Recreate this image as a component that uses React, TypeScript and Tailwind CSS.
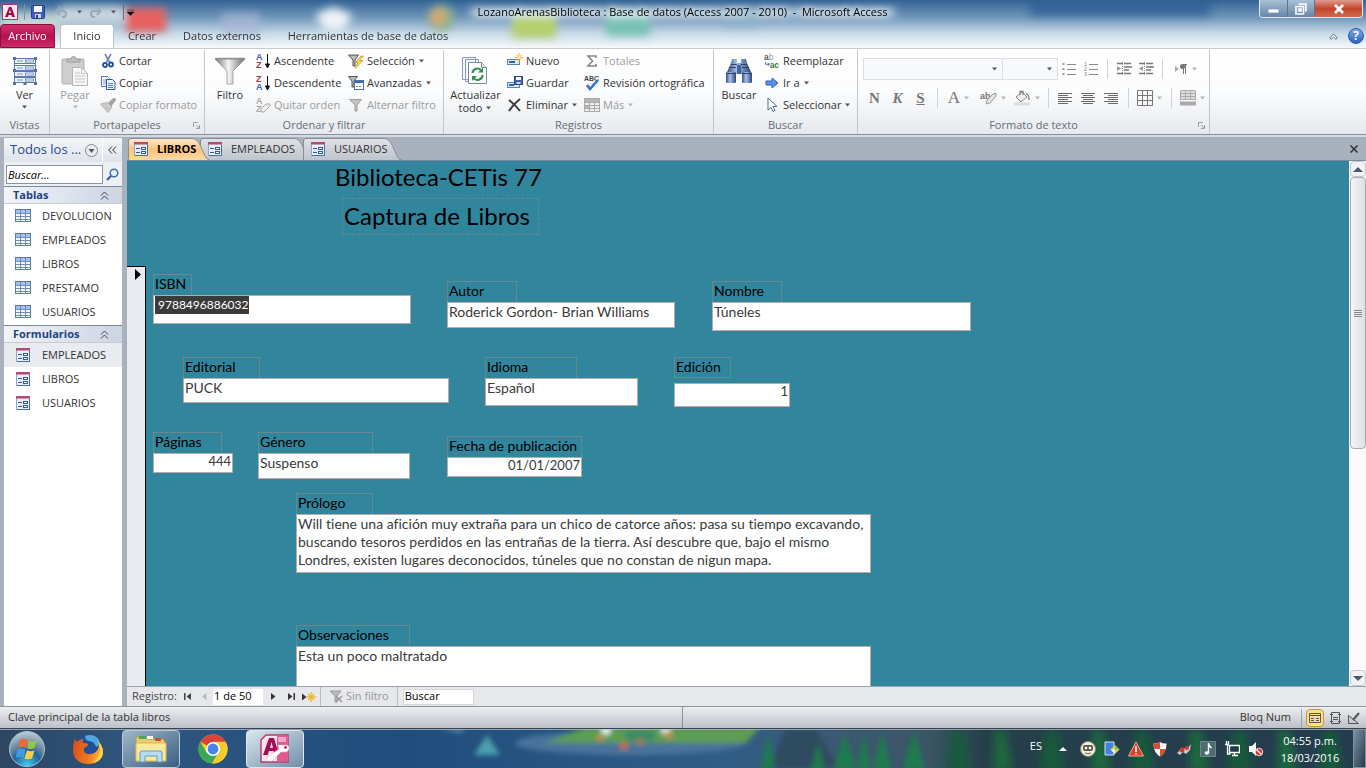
import React from "react";

type Kids = { children?: React.ReactNode };

/* ---------- small shared drawings ---------- */

function Caret({ dim = false }: { dim?: boolean }) {
  return (
    <svg width="7" height="4" viewBox="0 0 7 4" className="shrink-0">
      <path d="M1 0.5h5L3.5 3.5z" fill={dim ? "#b5b5b5" : "#555"} />
    </svg>
  );
}

function FormIcon() {
  return (
    <svg width="16" height="16" viewBox="0 0 16 16" className="shrink-0">
      <path d="M1.500 2.500h13v12h-13z" fill="#e6eefa" stroke="#8ea6cf" />
      <path d="M14.500 4v10.500H2" fill="none" stroke="#4a6aa8" />
      <path d="M1 1h14v2.500H1z" fill="#b24a74" />
      <path d="M3 7.500h4M3 11.500h4" stroke="#3457a0" />
      <rect x="8.500" y="6.500" width="4" height="2" fill="#fff" stroke="#3457a0" />
      <rect x="8.500" y="10.500" width="4" height="2" fill="#fff" stroke="#3457a0" />
    </svg>
  );
}

function TableIcon() {
  return (
    <svg width="16" height="14" viewBox="0 0 16 14" className="shrink-0">
      <rect x="0.500" y="0.500" width="15" height="12" fill="#f4f8fd" stroke="#5f7aa8" />
      <rect x="1" y="1" width="14" height="3" fill="#a9c0e4" />
      <path d="M1 4.500h14M1 7.500h14M1 10.500h14M5.500 1v12M10.500 1v12" stroke="#6f8cbd" />
    </svg>
  );
}

function Launcher() {
  return (
    <svg width="7" height="7" viewBox="0 0 7 7">
      <path d="M0.500 5V0.500H5M3 3l3 3M6.500 3v3.500H3" fill="none" stroke="#9a9fa6" />
    </svg>
  );
}

/* ---------- ribbon icons ---------- */

const icons = {
  ver: (
    <svg width="26" height="28" viewBox="0 0 26 28">
      <path d="M2.500 1v26M23.500 1v26" stroke="#5d7ab2" />
      {[1.500, 8.500, 14.500, 20.500].map((y) => (
        <g key={y}>
          <rect x="2.500" y={y} width="21" height="5" fill="#edf2fa" stroke="#5d7ab2" />
          <path d={`M5 ${y + 2.5}h6`} stroke="#7e98c6" />
          <rect x="13.500" y={y + 1.5} width="8" height="2" fill="#fff" stroke="#5d7ab2" strokeWidth="0.800" />
        </g>
      ))}
      <path d="M1 0h3v3H1zM22 0h3v3h-3zM1 12h3v3H1zM22 12h3v3h-3zM1 25h3v3H1zM22 25h3v3h-3zM11.500 25h3v3h-3z" fill="#5f6f92" />
    </svg>
  ),
  pegar: (
    <svg width="28" height="31" viewBox="0 0 28 31">
      <rect x="1" y="3" width="22" height="25" rx="1" fill="#cfcdd0" stroke="#b4b2b5" />
      <path d="M6 6V3h4a2.500 2.500 0 0 1 5 0h4v3z" fill="#c0bfc1" stroke="#9c9b9e" />
      <path d="M11.500 11.500h9l6 6v12h-15z" fill="#f6f6f7" stroke="#b4b4b6" />
      <path d="M20.500 11.500v6h6M14 17h5M14 20h10M14 23h10M14 26h10" fill="none" stroke="#c6c6c8" />
    </svg>
  ),
  cortar: (
    <svg width="16" height="16" viewBox="0 0 16 16">
      <path d="M5 1l5 9M11 1L6 10" stroke="#6d86b2" strokeWidth="1.600" />
      <circle cx="5" cy="12" r="2" fill="none" stroke="#2450a0" strokeWidth="1.800" />
      <circle cx="11" cy="11.500" r="2" fill="none" stroke="#2450a0" strokeWidth="1.800" />
    </svg>
  ),
  copiar: (
    <svg width="16" height="16" viewBox="0 0 16 16">
      <path d="M1.500 1.500h6l2 2v8h-8z" fill="#fff" stroke="#5577b5" />
      <path d="M3 5h4M3 7h4M3 9h3" stroke="#7a98cc" />
      <path d="M6.500 4.500h6l2.500 2.500v7.500H6.500z" fill="#eff5fd" stroke="#2f59a5" />
      <path d="M8 8.500h5M8 10.500h5M8 12.500h5" stroke="#5a7fc0" />
    </svg>
  ),
  formato: (
    <svg width="16" height="16" viewBox="0 0 16 16">
      <path d="M15.500 1l-3 .5L8 6l3 4 5-7z" fill="#a2a2a2" />
      <path d="M0.500 7l7-1.500L12 10l-4 5.500z" fill="#d2d2d2" stroke="#a5a5a5" strokeWidth="0.800" />
      <path d="M3 8l5 5M5 7l5 5" stroke="#b4b4b4" />
    </svg>
  ),
  filtro: (
    <svg width="32" height="28" viewBox="0 0 32 28">
      <defs>
        <linearGradient id="fun" x1="0" x2="1">
          <stop offset="0" stopColor="#747474" />
          <stop offset="0.450" stopColor="#f5f5f5" />
          <stop offset="1" stopColor="#6a6a6a" />
        </linearGradient>
      </defs>
      <path d="M1 2h30L19 14v13h-6V14z" fill="url(#fun)" stroke="#8a8a8a" strokeWidth="0.700" />
      <path d="M1 1.500h30" stroke="#909090" strokeWidth="1.500" />
    </svg>
  ),
  seleccion: (
    <svg width="16" height="16" viewBox="0 0 16 16">
      <path d="M0.500 2h10L7 7v6H5V7z" fill="#bbb" stroke="#555" />
      <path d="M13 3L7.500 9.500H10L7 15.500l8-8h-3.500l4-4.500z" fill="#ffd84a" stroke="#b48a1a" strokeWidth="0.700" />
    </svg>
  ),
  avanzadas: (
    <svg width="16" height="16" viewBox="0 0 16 16">
      <path d="M0.500 1.500h9L6 6v6H4V6z" fill="#bbb" stroke="#555" />
      <rect x="6.500" y="5.500" width="9" height="9" fill="#fff" stroke="#4a72b5" />
      <path d="M7 7h8" stroke="#3b68ba" strokeWidth="2" />
      <path d="M8 11.500h2M11 11.500h2" stroke="#777" />
    </svg>
  ),
  alternar: (
    <svg width="16" height="16" viewBox="0 0 16 16">
      <path d="M1.500 2.500h12L9 8v6H7V8z" fill="#c4c4c4" stroke="#9c9c9c" />
    </svg>
  ),
  actualizar: (
    <svg width="28" height="30" viewBox="0 0 28 30">
      <path d="M1.500 1.500h13v22h-13zM4.500 3.500h13v22h-13z" fill="#f6f7fb" stroke="#8c98b4" />
      <path d="M7.500 6.500h13l5 5v16h-18z" fill="#fff" stroke="#7786a6" />
      <path d="M20.500 6.500v5h5" fill="#dfe5f0" stroke="#7786a6" />
      <path d="M11.500 17a5 5 0 0 1 8.500-3M21.500 19a5 5 0 0 1-8.500 3.500" fill="none" stroke="#2e9447" strokeWidth="2.200" />
      <path d="M22 11.500v5h-5zM11 25v-5h5z" fill="#2e9447" />
    </svg>
  ),
  nuevo: (
    <svg width="16" height="16" viewBox="0 0 16 16">
      <rect x="0.500" y="6.500" width="12" height="5" fill="#dfeaf9" stroke="#5d80bb" />
      <path d="M2 9h6" stroke="#2d61b8" strokeWidth="2" />
      <path d="M12 0v9M7.500 4.500h9M9 1.500l6 6M15 1.500l-6 6" stroke="#eab620" />
      <circle cx="12" cy="4.500" r="1.500" fill="#fff4b0" />
    </svg>
  ),
  guardar: (
    <svg width="16" height="16" viewBox="0 0 16 16">
      <rect x="0.500" y="7.500" width="12" height="5" fill="#dfeaf9" stroke="#5d80bb" />
      <path d="M2 10h5" stroke="#2d61b8" strokeWidth="2" />
      <rect x="7.500" y="1.500" width="8" height="8" fill="#4661b0" stroke="#2d4386" />
      <path d="M9 2h5v3H9z" fill="#fff" />
      <path d="M9.500 7h4v2h-4z" fill="#cdd6ee" />
    </svg>
  ),
  eliminar: (
    <svg width="16" height="16" viewBox="0 0 16 16">
      <path d="M2 3c4 3 8 7 11 11M13 2C9 5 5 9 2 14" fill="none" stroke="#3a3a3a" strokeWidth="2" />
    </svg>
  ),
  totales: (
    <svg width="16" height="16" viewBox="0 0 16 16">
      <path d="M12 5V3H4l4.500 5L4 13h8v-2" fill="none" stroke="#888" strokeWidth="1.600" />
    </svg>
  ),
  revision: (
    <svg width="16" height="16" viewBox="0 0 16 16">
      <text x="0" y="6" fontSize="7" fontWeight="700" fontFamily="Liberation Sans" fill="#444">ABC</text>
      <path d="M3 10l3 4 8-9" fill="none" stroke="#3b6fca" strokeWidth="2.600" />
    </svg>
  ),
  mas: (
    <svg width="16" height="14" viewBox="0 0 16 14">
      <rect x="0.500" y="0.500" width="15" height="13" fill="#eee" stroke="#aaa" />
      <path d="M1 4.500h15M1 7.500h15M1 10.500h15M5.500 0v14M10.500 0v14" stroke="#aaa" />
      <path d="M1 1h14v3H1zM1 8h4v2H1z" fill="#b4b4b4" />
    </svg>
  ),
  buscar: (
    <svg width="28" height="28" viewBox="0 0 28 28">
      <defs>
        <linearGradient id="bin" x1="0" x2="1">
          <stop offset="0" stopColor="#35507f" />
          <stop offset="0.400" stopColor="#a9c1e8" />
          <stop offset="1" stopColor="#2c4674" />
        </linearGradient>
      </defs>
      <path d="M7 2h5v4h4V2h5l1 4 4 9v2H2v-2l4-9z" fill="url(#bin)" />
      <path d="M12 8h4v9h-4z" fill="#41629c" />
      <rect x="1" y="15" width="10" height="11" rx="1.500" fill="url(#bin)" />
      <rect x="17" y="15" width="10" height="11" rx="1.500" fill="url(#bin)" />
      <path d="M6 7.500h6M16 7.500h6M4 10.500h7M17 10.500h7M1 16.500h10M17 16.500h10" stroke="#2b4370" />
    </svg>
  ),
  reemplazar: (
    <svg width="17" height="16" viewBox="0 0 17 16">
      <text x="0" y="7" fontSize="9" fontWeight="700" fontFamily="Liberation Sans" fill="#555">a</text>
      <text x="5" y="7" fontSize="9" fontFamily="Liberation Sans" fill="#999">b</text>
      <text x="6" y="15" fontSize="9" fontWeight="700" fontFamily="Liberation Sans" fill="#3d7a45">ac</text>
      <path d="M1.500 9v2.500h4M4 10l2 1.500L4 13" fill="none" stroke="#4a6ba8" />
    </svg>
  ),
  ira: (
    <svg width="16" height="16" viewBox="0 0 16 16">
      <path d="M2 6h6V3l6 5-6 5v-3H2z" fill="#5d90e2" stroke="#2e5fb2" />
    </svg>
  ),
  seleccionar: (
    <svg width="16" height="16" viewBox="0 0 16 16">
      <path d="M4 1v12l3-2.500 2 4 2-1-2-4h4z" fill="#fff" stroke="#4d6794" />
    </svg>
  ),
};

function SortIcon({ a, b, ca, cb, dim }: { a: string; b: string; ca: string; cb: string; dim?: boolean }) {
  return (
    <svg width="16" height="18" viewBox="0 0 16 18">
      <text x="1" y="8" fontSize="9" fontWeight="700" fontFamily="Liberation Sans" fill={ca}>{a}</text>
      <text x="1" y="16" fontSize="9" fontWeight="700" fontFamily="Liberation Sans" fill={cb}>{b}</text>
      {dim ? (
        <path d="M6 13l5-5h4l-1 3-5 5H6z" fill="#eee" stroke="#aaa" />
      ) : (
        <path d="M12.500 2v12M10.500 12l2 4 2-4z" fill="#111" stroke="#111" />
      )}
    </svg>
  );
}

/* ---------- ribbon parts ---------- */

function Small({ icon, label, dim, caret }: { icon: React.ReactNode; label: string; dim?: boolean; caret?: boolean }) {
  return (
    <button className={`flex h-[22px] items-center gap-[3px] whitespace-nowrap ${dim ? "text-[#9c9c9c]" : "text-[#333]"}`}>
      <span className="flex w-4 shrink-0 justify-center">{icon}</span>
      <span>{label}</span>
      {caret && <Caret dim={dim} />}
    </button>
  );
}

function Big({ icon, children, dim }: Kids & { icon: React.ReactNode; dim?: boolean }) {
  return (
    <button className={`flex flex-col items-center pt-1 leading-[13px] ${dim ? "text-[#9c9c9c]" : "text-[#333]"}`}>
      <span className="flex h-[34px] items-center">{icon}</span>
      {children}
    </button>
  );
}

function Group({ title, launcher, className, children }: Kids & { title: string; launcher?: boolean; className: string }) {
  return (
    <section className={`flex flex-col border-r border-[#c3c7cd] ${className}`}>
      <div className="flex h-[67px]">{children}</div>
      <div className="flex h-[17px] items-center">
        <h2 className="flex-1 text-center text-[#666d77]">{title}</h2>
        {launcher && <button aria-label={`Opciones de ${title}`} className="mr-1 -ml-[11px]"><Launcher /></button>}
      </div>
    </section>
  );
}

function Sep() {
  return <span className="mx-[5px] h-5 w-px bg-[#cfd2d6]" />;
}

function Lines({ rows }: { rows: [number, number][] }) {
  return (
    <svg width="15" height="14" viewBox="0 0 15 14">
      {rows.map(([x, w], i) => (
        <path key={i} d={`M${x} ${i * 2 + 2.5}h${w}`} stroke="#6a6a6a" strokeWidth="1" />
      ))}
    </svg>
  );
}

function ListIcon({ numbered }: { numbered?: boolean }) {
  return (
    <svg width="14" height="14" viewBox="0 0 14 14">
      {[2, 7, 12].map((y, i) => (
        <g key={y}>
          {numbered ? (
            <text x="0" y={y + 2} fontSize="5" fontFamily="Liberation Sans" fill="#777">{i + 1}</text>
          ) : (
            <rect x="0.500" y={y - 1} width="2" height="2" fill="#999" />
          )}
          <path d={`M5 ${y + 0.5}h9`} stroke="#888" />
        </g>
      ))}
    </svg>
  );
}

function IndentIcon({ out }: { out?: boolean }) {
  return (
    <svg width="16" height="14" viewBox="0 0 16 14">
      <path d="M1 1.500h6M8 1.500h7M8 5h8M8 8h5M1 11.500h6M8 11.500h7" stroke="#777" strokeWidth="1.500" />
      <path d="M6.500 0v14" stroke="#999" strokeDasharray="1 1" />
      <path d={out ? "M5 4L1 6.500 5 9z" : "M1 4l4 2.500L1 9z"} fill="#999" />
    </svg>
  );
}

function IconBtn({ label, className = "w-[23px]", children }: Kids & { label: string; className?: string }) {
  return <button aria-label={label} className={`flex h-[22px] items-center justify-center gap-[3px] ${className}`}>{children}</button>;
}

function Ribbon() {
  return (
    <div className="flex h-[87px] shrink-0 border-t border-b border-t-[#c6ccd4] border-b-[#8b9098] bg-gradient-to-b from-white via-[#fbfcfd] to-[#e6e9ed] pt-px text-[11px]">
      <Group title="Vistas" className="w-[50px]">
        <div className="flex w-full justify-center">
          <Big icon={icons.ver}>Ver<span className="py-1"><Caret /></span></Big>
        </div>
      </Group>
      <Group title="Portapapeles" launcher className="w-[155px]">
        <div className="flex w-[50px] justify-center">
          <Big dim icon={icons.pegar}>Pegar<span className="py-1"><Caret dim /></span></Big>
        </div>
        <div>
          <Small icon={icons.cortar} label="Cortar" />
          <Small icon={icons.copiar} label="Copiar" />
          <Small dim icon={icons.formato} label="Copiar formato" />
        </div>
      </Group>
      <Group title="Ordenar y filtrar" className="w-[239px]">
        <div className="flex w-[50px] justify-center">
          <Big icon={icons.filtro}>Filtro</Big>
        </div>
        <div className="w-[93px]">
          <Small icon={<SortIcon a="A" b="Z" ca="#3a62a8" cb="#a53c46" />} label="Ascendente" />
          <Small icon={<SortIcon a="Z" b="A" ca="#a53c46" cb="#3a62a8" />} label="Descendente" />
          <Small dim icon={<SortIcon a="A" b="Z" ca="#aaa" cb="#aaa" dim />} label="Quitar orden" />
        </div>
        <div>
          <Small caret icon={icons.seleccion} label="Selección" />
          <Small caret icon={icons.avanzadas} label="Avanzadas" />
          <Small dim icon={icons.alternar} label="Alternar filtro" />
        </div>
      </Group>
      <Group title="Registros" className="w-[270px]">
        <div className="flex w-[63px] justify-center">
          <Big icon={icons.actualizar}>Actualizar<span className="flex items-center gap-[3px]">todo <Caret /></span></Big>
        </div>
        <div className="w-[77px]">
          <Small icon={icons.nuevo} label="Nuevo" />
          <Small icon={icons.guardar} label="Guardar" />
          <Small caret icon={icons.eliminar} label="Eliminar" />
        </div>
        <div>
          <Small dim icon={icons.totales} label="Totales" />
          <Small icon={icons.revision} label="Revisión ortográfica" />
          <Small dim caret icon={icons.mas} label="Más" />
        </div>
      </Group>
      <Group title="Buscar" className="w-[144px]">
        <div className="flex w-[50px] justify-center">
          <Big icon={icons.buscar}>Buscar</Big>
        </div>
        <div>
          <Small icon={icons.reemplazar} label="Reemplazar" />
          <Small caret icon={icons.ira} label="Ir a" />
          <Small caret icon={icons.seleccionar} label="Seleccionar" />
        </div>
      </Group>
      <Group title="Formato de texto" launcher className="w-[352px]">
        <div className="flex flex-col gap-[7px] pt-2 pl-[5px]">
          <div className="flex items-center">
            <div className="flex h-[22px] w-[140px] items-center justify-end border border-[#dcdfe3] bg-[#f8f9fa] pr-1">
              <select aria-label="Fuente" className="w-full appearance-none"><option></option></select><Caret />
            </div>
            <div className="flex h-[22px] w-[55px] items-center justify-end border border-l-0 border-[#dcdfe3] bg-[#f8f9fa] pr-1">
              <select aria-label="Tamaño" className="w-full appearance-none"><option></option></select><Caret />
            </div>
            <IconBtn label="Viñetas" className="w-[22px]"><ListIcon /></IconBtn>
            <IconBtn label="Numeración" className="w-[22px]"><ListIcon numbered /></IconBtn>
            <Sep />
            <IconBtn label="Aumentar sangría" className="w-[22px]"><IndentIcon /></IconBtn>
            <IconBtn label="Reducir sangría" className="w-[22px]"><IndentIcon out /></IconBtn>
            <Sep />
            <IconBtn label="Dirección del texto" className="w-9">
              <svg width="14" height="12" viewBox="0 0 14 12">
                <path d="M1 3l4 3-4 3z" fill="#aaa" />
                <path d="M9.500 1v10M11.500 1v10M13 1.500H9" stroke="#777" />
                <circle cx="8.500" cy="3.500" r="2.500" fill="#777" />
              </svg>
              <Caret dim />
            </IconBtn>
          </div>
          <div className="flex items-center font-['Liberation_Serif',serif] text-[15px] font-bold text-[#777]">
            <IconBtn label="Negrita">N</IconBtn>
            <IconBtn label="Cursiva"><i>K</i></IconBtn>
            <IconBtn label="Subrayado"><u>S</u></IconBtn>
            <Sep />
            <IconBtn label="Color de fuente" className="w-8"><span className="text-[17px] font-normal">A</span><Caret dim /></IconBtn>
            <IconBtn label="Color de resaltado" className="w-9">
              <svg width="17" height="14" viewBox="0 0 17 14">
                <text x="0" y="8" fontSize="9" fontFamily="Liberation Sans" fill="#777">ab</text>
                <path d="M7 9l6-6 3-1v3l-6 7-4 1z" fill="#e4e4e4" stroke="#999" />
              </svg>
              <Caret dim />
            </IconBtn>
            <IconBtn label="Color de fondo" className="w-8">
              <svg width="17" height="16" viewBox="0 0 17 16">
                <path d="M2 7l6-5 5 5-6 5z" fill="#eee" stroke="#888" />
                <path d="M6 5V1.500h3V5M12 4c3 0 3 3 3 6" fill="none" stroke="#888" strokeWidth="1.400" />
                <path d="M0 14h16" stroke="#dcdcdc" strokeWidth="3" />
              </svg>
              <Caret dim />
            </IconBtn>
            <Sep />
            <IconBtn label="Alinear a la izquierda"><Lines rows={[[0, 14], [0, 10], [0, 14], [0, 10], [0, 14], [0, 10]]} /></IconBtn>
            <IconBtn label="Centrar"><Lines rows={[[0, 14], [2, 10], [0, 14], [2, 10], [0, 14], [2, 10]]} /></IconBtn>
            <IconBtn label="Alinear a la derecha"><Lines rows={[[0, 14], [4, 10], [0, 14], [4, 10], [0, 14], [4, 10]]} /></IconBtn>
            <Sep />
            <IconBtn label="Líneas de división" className="w-8">
              <svg width="16" height="16" viewBox="0 0 16 16"><path d="M0.500 0.500h15v15H0.500zM5.500 0v16M10.500 0v16M0 5.500h16M0 10.500h16" fill="none" stroke="#777" /></svg>
              <Caret dim />
            </IconBtn>
            <Sep />
            <IconBtn label="Color de fila alternativo" className="w-8">
              <svg width="16" height="16" viewBox="0 0 16 16">
                <path d="M0.500 0.500h15v9H0.500z" fill="#ddd" stroke="#aaa" />
                <path d="M0 3.500h16M0 6.500h16M5.500 0v10M10.500 0v10" stroke="#aaa" />
                <path d="M0 13.500h16" stroke="#a9a9a9" strokeWidth="4" />
              </svg>
              <Caret dim />
            </IconBtn>
          </div>
        </div>
      </Group>
    </div>
  );
}

/* ---------- window frame ---------- */

function GlassBackdrop() {
  return (
    <svg className="absolute inset-0 h-full w-full" viewBox="0 0 1366 48" preserveAspectRatio="none" aria-hidden="true">
      <defs>
        <linearGradient id="sky" x2="0" y2="1">
          <stop offset="0" stopColor="#336394" />
          <stop offset="0.350" stopColor="#6d94b8" />
          <stop offset="0.700" stopColor="#c9dbe8" />
          <stop offset="1" stopColor="#f6f9fb" />
        </linearGradient>
        <filter id="soft" x="-50%" y="-50%" width="200%" height="200%"><feGaussianBlur stdDeviation="4" /></filter>
      </defs>
      <rect width="1366" height="48" fill="url(#sky)" />
      <g filter="url(#soft)">
        <rect x="0" y="12" width="60" height="20" fill="#cfe0d8" opacity="0.800" />
        <rect x="60" y="6" width="65" height="18" fill="#d8e2e4" opacity="0.850" />
        <rect x="126" y="8" width="40" height="24" fill="#e8605f" />
        <rect x="222" y="13" width="38" height="22" fill="#a9b6d6" opacity="0.700" />
        <path d="M315 15l18-8 20 8-10 16h-18z" fill="#edf2f7" />
        <circle cx="441" cy="18" r="13" fill="#8fb48a" />
        <rect x="432" y="10" width="12" height="14" fill="#e2a56c" />
        <rect x="512" y="14" width="44" height="24" fill="#b5cf6c" />
        <rect x="606" y="10" width="44" height="26" fill="#78c2b4" />
        <rect x="470" y="8" width="425" height="9" fill="#e3edf5" opacity="0.700" />
        <rect x="725" y="12" width="34" height="14" fill="#8eb3cc" />
        <rect x="1030" y="0" width="180" height="16" fill="#2a5b90" opacity="0.700" />
      </g>
    </svg>
  );
}

function Header() {
  return (
    <header className="relative h-12 shrink-0 overflow-hidden">
      <GlassBackdrop />
      <div className="relative flex h-6 items-center">
        <div className="flex flex-1 items-center gap-[6px] pl-[2px]">
          <svg width="16" height="16" viewBox="0 0 16 16">
            <rect x="0.500" y="0.500" width="15" height="15" fill="#fbe6ee" stroke="#a03a66" />
            <path d="M3 13L7 3h2.500L13 13h-3l-.6-2H6.500L6 13zM7 9h2L8 5.500z" fill="#9c1250" fillRule="evenodd" />
          </svg>
          <span className="h-4 w-px bg-[#7d93a8]" />
          <button aria-label="Guardar">
            <svg width="14" height="14" viewBox="0 0 14 14">
              <rect x="0.500" y="0.500" width="13" height="13" rx="1" fill="#3f5fc0" stroke="#28408c" />
              <path d="M3 1h8v6H3z" fill="#f3f6fc" /><path d="M4 9h6v4H4z" fill="#c9d4ee" /><path d="M5 10h2v3H5z" fill="#28408c" />
            </svg>
          </button>
          <button aria-label="Deshacer" className="flex items-center gap-2 pl-1">
            <svg width="13" height="12" viewBox="0 0 13 12"><path d="M3 5h5a3 3 0 0 1 0 6H7M5 1L1.500 5 5 9" fill="none" stroke="#9aa9b6" strokeWidth="2" /></svg>
            <Caret />
          </button>
          <button aria-label="Rehacer" className="flex items-center gap-2">
            <svg width="13" height="12" viewBox="0 0 13 12"><path d="M10 5H5a3 3 0 0 0 0 6h1M8 1l3.500 4L8 9" fill="none" stroke="#9aa9b6" strokeWidth="2" /></svg>
            <Caret />
          </button>
          <span className="h-4 w-px bg-[#5e7488]" />
          <button aria-label="Personalizar barra" className="-ml-[3px]">
            <svg width="7" height="7" viewBox="0 0 7 7"><path d="M0 1h7M0 3h7L3.500 6.500z" fill="#111" stroke="#111" strokeWidth="0.500" /></svg>
          </button>
        </div>
        <h1 className="text-[11px] whitespace-pre text-black [text-shadow:0_0_6px_#fff,0_0_8px_#fff]">
          LozanoArenasBiblioteca : Base de datos (Access 2007 - 2010)  -  Microsoft Access
        </h1>
        <div className="flex flex-1 justify-end self-start pr-[3px]">
          <div className="flex h-[18px] overflow-hidden rounded-b border border-t-0 border-[#dce8f2]">
            <button aria-label="Minimizar" className="flex w-7 items-center justify-center border-r border-[#5b7694] bg-gradient-to-b from-[#a9bfd4] to-[#6586a8] pt-1">
              <svg width="11" height="4"><rect width="11" height="4" fill="#fff" stroke="#56687d" strokeWidth="0.600" /></svg>
            </button>
            <button aria-label="Restaurar" className="flex w-[27px] items-center justify-center border-r border-[#5b7694] bg-gradient-to-b from-[#a9bfd4] to-[#6586a8]">
              <svg width="12" height="12" viewBox="0 0 12 12"><path d="M3.500 1h7.500v7.500M1 3.500h7.500V11H1zM4 6h2v2H4z" fill="none" stroke="#fff" strokeWidth="1.600" /></svg>
            </button>
            <button aria-label="Cerrar" className="flex w-[47px] items-center justify-center bg-gradient-to-b from-[#dd9a8c] via-[#c4452f] to-[#cf6b4a]">
              <svg width="12" height="10" viewBox="0 0 12 10"><path d="M2 1l8 8M10 1L2 9" stroke="#fff" strokeWidth="2.800" /></svg>
            </button>
          </div>
        </div>
      </div>
      <nav className="relative flex h-6 items-stretch text-[11px] text-[#333]">
        <button className="w-[55px] rounded-t border border-[#8c0b43] bg-gradient-to-b from-[#d0326c] via-[#b3104f] to-[#cf2a68] text-white">Archivo</button>
        <button className="ml-[5px] w-[54px] rounded-t border border-b-0 border-[#b8c3cf] bg-white">Inicio</button>
        <button className="w-14">Crear</button>
        <button className="ml-2 w-[88px]">Datos externos</button>
        <button className="ml-2 w-[188px]">Herramientas de base de datos</button>
        <div className="ml-auto flex items-center gap-[10px] pr-[2px]">
          <button aria-label="Minimizar la cinta">
            <svg width="9" height="7" viewBox="0 0 9 7"><path d="M0.700 5L4.500 1l3.800 4-1.500 1.200L4.500 4 2.200 6.200z" fill="#fff" stroke="#444" strokeWidth="0.800" /></svg>
          </button>
          <button aria-label="Ayuda" className="flex size-4 items-center justify-center rounded-full border border-[#2c5ba8] bg-gradient-to-b from-[#7ea6e6] to-[#2d63bd] text-[12px] font-bold text-white">?</button>
        </div>
      </nav>
    </header>
  );
}

/* ---------- navigation pane ---------- */

function DoubleUp() {
  return <svg width="9" height="9" viewBox="0 0 9 9"><path d="M1 4.500L4.500 1 8 4.500M1 8.500L4.500 5 8 8.500" fill="none" stroke="#444" /></svg>;
}

function NavSection({ title, items, icon, active }: { title: string; items: string[]; icon: React.ReactNode; active?: number }) {
  return (
    <section className="pb-px">
      <button className="flex h-[18px] w-full items-center justify-between border-t border-b border-t-[#7f8897] border-b-[#c5cad3] bg-gradient-to-r from-[#f1f4f8] to-[#cdd4e2] pr-[13px] pl-[9px] text-[11px] font-bold text-[#1e4287]">
        {title}<DoubleUp />
      </button>
      <ul>
        {items.map((it, i) => (
          <li key={it}>
            <button className={`flex h-6 w-full items-center gap-[11px] pl-[11px] text-[11px] text-[#333] ${i === active ? "bg-[#e8ebf0]" : ""}`}>
              {icon}{it}
            </button>
          </li>
        ))}
      </ul>
    </section>
  );
}

function NavPane() {
  return (
    <aside className="flex w-[118px] shrink-0 flex-col bg-white">
      <div className="flex h-6 items-center bg-gradient-to-b from-[#f4f6f9] to-[#dfe3ea] pl-[6px]">
        <span className="flex-1 text-[13px] whitespace-nowrap text-[#1f4a94]">Todos los ...</span>
        <button aria-label="Elegir categoría" className="mr-1">
          <svg width="13" height="13" viewBox="0 0 13 13"><circle cx="6.500" cy="6.500" r="6" fill="#e9ebee" stroke="#888" /><path d="M3.500 5h6l-3 4z" fill="#555" /></svg>
        </button>
        <button aria-label="Contraer panel" className="flex h-full w-5 items-center justify-center border-l border-white">
          <svg width="9" height="8" viewBox="0 0 9 8"><path d="M4 0.500L0.700 4 4 7.500M8 0.500L4.700 4 8 7.500" fill="none" stroke="#333" /></svg>
        </button>
      </div>
      <div className="flex h-6 items-center gap-[3px] bg-[#eceff3] px-[2px]">
        <input aria-label="Buscar objetos" placeholder="Buscar..." className="h-[19px] w-[97px] border border-[#8994a3] bg-white px-[1px] text-[11px] italic placeholder:text-black" />
        <svg width="13" height="13" viewBox="0 0 13 13"><circle cx="8" cy="5" r="3.800" fill="#eaf4fd" stroke="#3f6fae" strokeWidth="1.500" /><path d="M5 8l-4 4" stroke="#2f5c9e" strokeWidth="2.200" /></svg>
      </div>
      <NavSection title="Tablas" icon={<TableIcon />} items={["DEVOLUCION", "EMPLEADOS", "LIBROS", "PRESTAMO", "USUARIOS"]} />
      <NavSection title="Formularios" icon={<FormIcon />} items={["EMPLEADOS", "LIBROS", "USUARIOS"]} active={0} />
    </aside>
  );
}

/* ---------- document area ---------- */

function DocTab({ label, active, className, d, viewBox }: { label: string; active?: boolean; className: string; d: string; viewBox: string }) {
  return (
    <button className={`relative flex h-[22px] items-center ${className}`}>
      <svg className="absolute inset-0 h-full w-full" viewBox={viewBox} preserveAspectRatio="none">
        <defs>
          <linearGradient id={`tab${label}`} x2="0" y2="1">
            <stop offset="0" stopColor={active ? "#fdebd0" : "#dfe2e6"} />
            <stop offset="0.500" stopColor={active ? "#fbc27e" : "#cfd3d8"} />
            <stop offset="1" stopColor={active ? "#fdd9a0" : "#bfc5cd"} />
          </linearGradient>
        </defs>
        <path d={d} fill={`url(#tab${label})`} stroke="#868e99" />
      </svg>
      <span className="relative flex items-center gap-2"><FormIcon /><span className={active ? "font-bold text-black" : "text-[#333]"}>{label}</span></span>
    </button>
  );
}

type FieldProps = {
  id: string;
  label: string;
  value: string;
  className?: string;
  labelClass: string;
  boxClass: string;
  right?: boolean;
  selected?: boolean;
};

function Field({ id, label, value, className = "", labelClass, boxClass, right, selected }: FieldProps) {
  return (
    <div className={`flex shrink-0 flex-col items-start ${className}`}>
      <label htmlFor={id} className={`h-[21px] border border-b-0 border-[#6b8890] px-px leading-[18px] whitespace-nowrap text-black ${labelClass}`}>{label}</label>
      <div className={`border border-[#b9aca6] bg-white px-px ${boxClass}`}>
        <input
          id={id}
          defaultValue={value}
          className={`block ${selected ? "h-[18px] w-[94px] bg-[#3b3b3b] pl-[3px] text-[12px] text-white" : "h-4 w-full text-[#3a3a3a]"} ${right ? "text-right text-[13px]" : ""}`}
        />
      </div>
    </div>
  );
}

function Memo({ id, label, value, className, labelClass, boxClass }: FieldProps) {
  return (
    <div className={`ml-[150px] flex flex-col items-start ${className}`}>
      <label htmlFor={id} className={`h-[21px] shrink-0 border border-b-0 border-[#6b8890] px-px leading-[18px] text-black ${labelClass}`}>{label}</label>
      <textarea id={id} defaultValue={value} className={`block w-[575px] resize-none overflow-hidden border border-[#b9aca6] bg-white px-px leading-[18px] whitespace-pre text-[#3a3a3a] ${boxClass}`} />
    </div>
  );
}

const prologo =
  "Will tiene una afición muy extraña para un chico de catorce años: pasa su tiempo excavando,\nbuscando tesoros perdidos en las entrañas de la tierra. Así descubre que, bajo el mismo\nLondres, existen lugares deconocidos, túneles que no constan de nigun mapa.";

function BookForm() {
  return (
    <form className="flex min-w-0 flex-1 flex-col overflow-hidden bg-[#31859c] font-['Lato',sans-serif] text-[14px] [font-variant-ligatures:none]">
      <div className="h-[105px] shrink-0 pl-[208px] text-[24px] text-black">
        <h2 className="leading-[32px]">Biblioteca-CETis 77</h2>
        <h3 className="mt-[5px] ml-[7px] h-[37px] w-[197px] border border-dashed border-[#6b8890] px-px leading-[33px] whitespace-nowrap">Captura de Libros</h3>
      </div>
      <div className="flex min-h-0 flex-1">
        <div className="w-[19px] shrink-0 border-t border-r border-black bg-[#e8ebf0] pt-[2px] pl-2">
          <svg width="6" height="11" viewBox="0 0 6 11"><path d="M0 0l6 5.500L0 11z" fill="#000" /></svg>
        </div>
        <div className="flex min-w-0 flex-1 flex-col overflow-hidden pt-2">
          <div className="flex items-start gap-9 pl-[7px]">
            <Field id="isbn" label="ISBN" value="9788496886032" labelClass="w-[39px]" boxClass="h-[29px] w-[258px]" selected />
            <Field id="autor" label="Autor" value="Roderick Gordon- Brian Williams" className="mt-[7px]" labelClass="w-[70px]" boxClass="h-[26px] w-[228px]" />
            <Field id="nombre" label="Nombre" value="Túneles" className="ml-px mt-[7px]" labelClass="w-[70px]" boxClass="h-[29px] w-[259px]" />
          </div>
          <div className="mt-[26px] flex items-start gap-9 pl-[37px]">
            <Field id="editorial" label="Editorial" value="PUCK" labelClass="w-[77px]" boxClass="h-[25px] w-[266px]" />
            <Field id="idioma" label="Idioma" value="Español" labelClass="w-[92px]" boxClass="h-[28px] w-[153px]" />
            <Field id="edicion" label="Edición" value="1" labelClass="mb-[5px] w-[57px] border-b-1" boxClass="h-[24px] w-[116px]" right />
          </div>
          <div className="mt-[25px] flex items-start pl-[7px]">
            <Field id="paginas" label="Páginas" value="444" labelClass="w-[69px]" boxClass="h-5 w-[80px]" right />
            <Field id="genero" label="Género" value="Suspenso" className="ml-[25px]" labelClass="w-[115px]" boxClass="h-[26px] w-[152px]" />
            <Field id="fecha" label="Fecha de publicación" value="01/01/2007" className="mt-1 ml-[37px]" labelClass="w-[135px]" boxClass="h-5 w-[135px]" right />
          </div>
          <Memo id="prologo" label="Prólogo" value={prologo} className="mt-[14px] shrink-0" labelClass="w-[77px]" boxClass="h-[59px]" />
          <Memo id="observaciones" label="Observaciones" value="Esta un poco maltratado" className="mt-[52px] min-h-0 flex-1" labelClass="w-[114px]" boxClass="flex-1 border-b-0" />
        </div>
      </div>
    </form>
  );
}

function ScrollBar() {
  return (
    <div className="flex w-[17px] shrink-0 flex-col items-center bg-[#fafafb]">
      <button aria-label="Subir" className="flex h-4 w-4 items-center justify-center rounded-sm border border-[#c3c7cd] bg-[#f1f2f4]">
        <svg width="10" height="5"><path d="M0 5l5-5 5 5z" fill="#4a5878" /></svg>
      </button>
      <div className="flex w-4 flex-[272] flex-col items-center justify-center gap-px rounded-sm border border-[#a5abb3] bg-gradient-to-r from-[#f5f5f6] to-[#dddfe2]">
        {[0, 1, 2, 3].map((n) => <span key={n} className="h-px w-2 bg-[#888]" />)}
      </div>
      <div className="flex-[222]" />
      <button aria-label="Bajar" className="flex h-4 w-4 items-center justify-center rounded-sm border border-[#c3c7cd] bg-[#f1f2f4]">
        <svg width="10" height="5"><path d="M0 0h10L5 5z" fill="#4a5878" /></svg>
      </button>
    </div>
  );
}

function RecordBar() {
  return (
    <div className="flex h-5 shrink-0 items-center border-t border-[#9aa3ad] bg-[#e6e8ec] text-[11px] text-[#444]">
      <span className="w-[57px] pl-[5px]">Registro:</span>
      <button aria-label="Primer registro" className="w-4"><svg width="8" height="7"><path d="M0 0h1.500v7H0zM7 0v7L2.500 3.500z" fill="#444" /></svg></button>
      <button aria-label="Registro anterior" className="ml-[2px] w-[11px]"><svg width="5" height="7"><path d="M4.500 0v7L0 3.500z" fill="#b5b8bd" /></svg></button>
      <input aria-label="Registro actual" defaultValue="1 de 50" className="h-4 w-[50px] bg-white px-px text-black" />
      <button aria-label="Registro siguiente" className="ml-[8px] w-[17px]"><svg width="5" height="7"><path d="M0 0v7l4.500-3.500z" fill="#333" /></svg></button>
      <button aria-label="Último registro" className="w-[14px]"><svg width="8" height="7"><path d="M0 0v7l4.500-3.500zM5.500 0H7v7H5.500z" fill="#333" /></svg></button>
      <button aria-label="Nuevo registro" className="w-[18px]"><svg width="14" height="10" viewBox="0 0 14 10"><path d="M0 1.500v7L4.500 5z" fill="#333" /><path d="M9 0v10M5 5h9M6 2l6 6M12 2L6 8" stroke="#edb82e" strokeWidth="1.300" /></svg></button>
      <button className="flex h-full items-center gap-[3px] border-x border-[#b9bdc4] px-2 text-[#999]">
        <svg width="14" height="13" viewBox="0 0 14 13"><path d="M1 1h11L8 6v6H6V6z" fill="#bbb" stroke="#999" /><path d="M7 6l6 6M13 6l-6 6" stroke="#999" strokeWidth="1.500" /></svg>
        Sin filtro
      </button>
      <input aria-label="Buscar registro" defaultValue="Buscar" className="ml-[5px] h-4 w-[71px] border border-[#d3d6da] bg-white px-px text-black" />
    </div>
  );
}

/* ---------- status bar and taskbar ---------- */

function StatusBar() {
  return (
    <footer className="flex h-[23px] shrink-0 items-center border-t border-b border-t-[#8d939b] border-b-[#39434f] bg-gradient-to-b from-[#eceef1] to-[#bdc1c7] text-[11px] text-[#333]">
      <span className="flex h-full w-1/2 items-center border-r border-[#8b9199] pl-2">Clave principal de la tabla libros</span>
      <span className="ml-auto pr-[10px]">Bloq Num</span>
      <div className="flex items-center gap-[3px] border-l border-[#9da3ab] pr-1 pl-1">
        <button aria-label="Vista Formulario" className="flex h-[18px] w-[18px] items-center justify-center rounded-sm border border-[#c29a3e] bg-[#fbe08a]">
          <svg width="12" height="10" viewBox="0 0 12 10"><path d="M0.500 0.500h11v9H0.500zM0.500 2.500h11M2 5.500h3M2 7.500h3M7 5.500h3M7 7.500h3" fill="none" stroke="#555" /></svg>
        </button>
        <button aria-label="Vista Presentación" className="flex w-4 justify-center"><svg width="11" height="12" viewBox="0 0 11 12"><path d="M1.500 0.500h8v11h-8zM0 2.500h3M8 2.500h3M3 5.500h5M3 7.500h5M0 9.500h3M8 9.500h3" fill="none" stroke="#555" /></svg></button>
        <button aria-label="Vista Diseño" className="flex w-4 justify-center"><svg width="12" height="12" viewBox="0 0 12 12"><path d="M0.500 3.500v8h10z" fill="#c9ccd1" stroke="#555" /><path d="M11 1L5 8" stroke="#555" strokeWidth="2" /></svg></button>
      </div>
    </footer>
  );
}

function TaskBackdrop() {
  const trees = [768, 818, 845, 864, 882, 914];
  const woods = [958, 1000, 1052, 1098, 1142, 1196, 1240, 1284, 1330];
  return (
    <svg className="absolute inset-0 h-full w-full" viewBox="0 0 1366 39" preserveAspectRatio="none" aria-hidden="true">
      <defs>
        <linearGradient id="task">
          <stop offset="0" stopColor="#2e4661" />
          <stop offset="0.100" stopColor="#2f567f" />
          <stop offset="0.300" stopColor="#1f4d7d" />
          <stop offset="0.530" stopColor="#305d87" />
          <stop offset="0.620" stopColor="#3d5870" />
          <stop offset="0.680" stopColor="#3a5665" />
          <stop offset="0.720" stopColor="#263f4b" />
          <stop offset="1" stopColor="#243c4e" />
        </linearGradient>
        <filter id="blur2" x="-20%" y="-20%" width="140%" height="140%"><feGaussianBlur stdDeviation="2.500" /></filter>
        <filter id="blur4" x="-20%" y="-20%" width="140%" height="140%"><feGaussianBlur stdDeviation="5" /></filter>
      </defs>
      <rect width="1366" height="39" fill="url(#task)" />
      <g filter="url(#blur2)">
        <ellipse cx="630" cy="14" rx="115" ry="12" fill="#48739c" />
        <path d="M545 14l40-16h175l-14 16z" fill="#5d9c52" />
        <circle cx="606" cy="1" r="5" fill="#e6efe6" /><circle cx="666" cy="1" r="5" fill="#dfe9df" />
        <path d="M625 2h30v10h-30z" fill="#3d8a63" />
        <circle cx="600" cy="9" r="3" fill="#d2813f" /><circle cx="624" cy="17" r="4" fill="#c46a3f" /><circle cx="640" cy="13" r="3" fill="#b9753f" /><circle cx="669" cy="6" r="4" fill="#c08a4c" />
        <path d="M487 6l13 20h-26z" fill="#4aa0ae" />
        <path d="M785 0h30l25 39h-70z" fill="#2f4c5f" />
        {trees.map((x, i) => (
          <path key={x} d={`M${x} ${i === 1 ? 14 : 3}l${7 + (i % 3) * 2} 37h-${14 + (i % 3) * 4}z`} fill="#1f7c4e" />
        ))}
        <path d="M460 0h-20l25 3z" fill="#8fc0d0" />
      </g>
      <g filter="url(#blur4)">
        {woods.map((x, i) => (
          <path key={x} d={`M${x - 5} 0h10l8 42h-${26 - (i % 2) * 6}z`} fill={i % 2 ? "#1a6a3c" : "#175c3b"} />
        ))}
      </g>
      <path d="M0 0.500h1366" stroke="#b8c8d4" opacity="0.700" />
    </svg>
  );
}

function Taskbar() {
  return (
    <div className="relative h-[39px] shrink-0">
      <TaskBackdrop />
      <div className="relative flex h-full items-center">
        <button aria-label="Inicio" className="flex w-[54px] justify-center">
          <svg width="38" height="38" viewBox="0 0 38 38">
            <defs>
              <radialGradient id="orb" cx="0.500" cy="0.950" r="0.900"><stop offset="0" stopColor="#45c8ee" /><stop offset="0.450" stopColor="#1f6396" /><stop offset="0.600" stopColor="#5c7f9b" /><stop offset="1" stopColor="#b5c3cf" /></radialGradient>
            </defs>
            <circle cx="19" cy="19" r="17.500" fill="url(#orb)" stroke="#a9c2d3" />
            <path d="M12 10c3-2 5-1 7.500 0L18 18c-3-1.500-5-1.500-8-.5z" fill="#ec6a35" />
            <path d="M21 10.500c3 1.500 5 1 8-.5l-2.500 8c-3 1.200-5 1.200-7.500 0z" fill="#91c848" />
            <path d="M9.500 19.500c3-1.200 5-1 8 .3L15.500 28c-3-1.500-5-1.300-8-.3z" fill="#3f9be0" />
            <path d="M19 20.200c3 1.300 5 1.200 7.500.2L24 28.500c-3 1-5 1-7.500 0z" fill="#fbd045" />
          </svg>
        </button>
        <button aria-label="Firefox" className="flex w-[68px] justify-center">
          <svg width="32" height="32" viewBox="0 0 32 32">
            <defs>
              <linearGradient id="fox" x1="0" y1="0.300" x2="1" y2="0.600"><stop offset="0" stopColor="#d9501c" /><stop offset="0.600" stopColor="#ee7a1d" /><stop offset="1" stopColor="#fbc13a" /></linearGradient>
            </defs>
            <circle cx="17" cy="13.500" r="12" fill="#1f4f96" />
            <path d="M13 3c5-2 11-1 14 4 1 3 0 6-3 7-1-4-4-6-8-6-2-1-3-3-3-5z" fill="#4fa8e0" />
            <path d="M3 5c0 2 1 3 2 4 2-2 4-3 7-3-1 1-2 3-1 4 2 0 4 0 5 1 0 2-2 3-4 4-1 4 2 6 5 6 4 0 7-1 9-5 1-2 1-5 0-8 3 3 5 7 5 11 0 7-6 12-15 12S1 25 1 17C1 12 2 8 3 5z" fill="url(#fox)" />
            <path d="M26 8c3 3 5 7 5 11 0 5-4 10-10 11 5-4 7-8 7-13 0-3-1-6-2-9z" fill="#fdd04a" />
          </svg>
        </button>
        <button aria-label="Explorador" className="flex h-[38px] w-[58px] items-center justify-center rounded-sm border border-[#b9c9d6] bg-gradient-to-br from-[#9fb6c8] to-[#3b5f82]">
          <svg width="34" height="30" viewBox="0 0 34 30">
            <path d="M2 3h9l2 2h16l2 3v19H2z" fill="#e8cd6e" stroke="#b99a3e" />
            <path d="M5 2h7v3H5z" fill="#4fa851" /><path d="M13 2h6v3h-6z" fill="#fff" /><path d="M21 4h6v3h-6z" fill="#c0553a" />
            <path d="M2 9h30v18H2z" fill="#fae89a" stroke="#d6b956" />
            <path d="M6 28V19q0-2 2-2h18q2 0 2 2v9h-5v-6H11v6z" fill="#b4dcf2" stroke="#5f9cc8" />
          </svg>
        </button>
        <button aria-label="Chrome" className="flex w-[66px] justify-center">
          <svg width="30" height="30" viewBox="0 0 30 30">
            <circle cx="15" cy="15" r="14.500" fill="#f6cb2e" />
            <path d="M15 15L2.500 7.700A14.500 14.500 0 0 1 27.600 7.700H15z" fill="#dc4237" />
            <path d="M15 15l-6.300 3.700L2.400 7.700A14.500 14.500 0 0 0 14 29.500l6-11z" fill="#3aa657" />
            <path d="M15 8h12.700a14.500 14.500 0 0 1-13 21.500L21 18z" fill="#f6cb2e" />
            <circle cx="15" cy="15" r="7" fill="#fff" /><circle cx="15" cy="15" r="5.400" fill="#4384ee" />
          </svg>
        </button>
        <button aria-label="Access" className="flex h-[38px] w-[58px] items-center justify-center rounded-sm border border-[#dfe7ed] bg-gradient-to-br from-[#dce6ed] to-[#6f8fab]">
          <svg width="30" height="30" viewBox="0 0 30 30">
            <path d="M6 1h22v27H1V6z" fill="#fbe3eb" stroke="#b23b6d" strokeWidth="1.400" />
            <path d="M17 2h10v25H17z" fill="#e05a90" />
            <path d="M18 3h8v5h-8z" fill="#f2a4c1" />
            <path d="M3 21L9 4h5l5 17h-4.500l-1-4H9l-1.200 4zM10 14h3l-1.500-6z" fill="#a30f52" fillRule="evenodd" />
            <path d="M18 11h8q3 0 3 3t-3 4h-5l-9 9H7v-4l12-8z" fill="#fff" stroke="#e9a9c2" strokeWidth="0.600" />
            <circle cx="25.500" cy="13.500" r="1.400" fill="#c5276b" />
          </svg>
        </button>
        <div className="ml-auto flex h-full items-center text-[11px] text-white">
          <span className="pr-[17px] pb-1">ES</span>
          <button aria-label="Iconos ocultos" className="w-[21px]"><svg width="8" height="5"><path d="M0 5l4-4 4 4z" fill="#fff" /></svg></button>
          <div className="flex gap-2">
            <svg width="16" height="16" viewBox="0 0 16 16"><circle cx="8" cy="8" r="7.500" fill="#efecd9" stroke="#8a8772" /><path d="M3 6q0-2 2-2h6q2 0 2 2v2q0 2-2 2H5q-2 0-2-2z" fill="#5b5a4c" /><circle cx="6" cy="7" r="1.300" fill="#fff" /><circle cx="10" cy="7" r="1.300" fill="#fff" /><path d="M5 12q3 1.500 6 0" stroke="#6b6a5a" fill="none" /></svg>
            <svg width="16" height="16" viewBox="0 0 16 16"><path d="M1 1h9v13H1z" fill="#4183db" stroke="#d8e7f9" /><path d="M11 4l4.500 4.500L11 13 6.500 8.500z" fill="#e4ce56" /><path d="M11 4l4.500 4.500H11z" fill="#6dc05b" /><path d="M6.500 8.500H11V13z" fill="#e9e9f0" /></svg>
            <svg width="16" height="16" viewBox="0 0 16 16"><path d="M8 1l7.500 14H.5z" fill="#df3a2c" stroke="#f5a59b" /><path d="M7.200 5h1.600v6H7.200zM7.200 12h1.600v1.600H7.200z" fill="#fff" /></svg>
            <svg width="16" height="16" viewBox="0 0 16 16"><path d="M8 1q3 2 6.500 1.500C14.500 9 12 13 8 15.500 4 13 1.500 9 1.500 2.500 5 3 8 1 8 1z" fill="#fff" /><path d="M8 1v7H2.300Q1.500 5 1.500 2.500 5 3 8 1zM8 8h5.700c-1 3.500-3 6-5.700 7.500z" fill="#dd4c32" /></svg>
            <svg width="16" height="16" viewBox="0 0 16 16"><path d="M1 12l5-5 5 1 4-5-1 6-4 4-3-2-3 3z" fill="#c9c9cb" /><circle cx="6" cy="9" r="2.500" fill="#cf3b33" /><circle cx="11" cy="7" r="2" fill="#cf3b33" /></svg>
            <svg width="16" height="16" viewBox="0 0 16 16"><path d="M0.500 0.500h15v15H0.500z" fill="#4e6b70" stroke="#6d888b" /><path d="M8.500 12V2q0 3 3 5" fill="none" stroke="#fff" strokeWidth="1.400" /><ellipse cx="6.800" cy="12" rx="2.200" ry="1.700" fill="#fff" /></svg>
            <svg width="16" height="16" viewBox="0 0 16 16"><path d="M5.500 4.500h10v7h-10zM8 14.500h6M10.500 12v2M1 3.500h4M2.500 0v3M4.500 0v3M3.500 4v9h3" fill="#1d3a45" stroke="#fff" strokeWidth="1.300" /></svg>
            <svg width="16" height="16" viewBox="0 0 16 16"><path d="M1 5h3l4-4v14l-4-4H1z" fill="#fff" /><circle cx="11" cy="11" r="3.800" fill="#d8332b" stroke="#fff" strokeWidth="0.800" /><path d="M8.500 8.500l5 5" stroke="#fff" strokeWidth="1.400" /></svg>
          </div>
          <div className="ml-[11px] w-[70px] text-center leading-[17px] whitespace-nowrap">04:55 p.m.<br />18/03/2016</div>
          <button aria-label="Mostrar escritorio" className="ml-2 h-full w-[13px] border border-[#7f93a3] bg-gradient-to-br from-[#7d92a5] to-[#253d50]" />
        </div>
      </div>
    </div>
  );
}

export default function App() {
  return (
    <div className="flex h-screen flex-col overflow-hidden bg-[#a9b1bd] font-['Open_Sans',sans-serif]">
      <Header />
      <Ribbon />
      <main className="flex min-h-0 flex-1 border-t-2 border-[#d3dae3] bg-[#a9b1bd] pt-px pl-1">
        <NavPane />
        <div className="ml-[5px] flex min-w-0 flex-1 flex-col">
          <div className="flex h-[23px] shrink-0 items-start border-b border-[#7b8a98] pl-px text-[11px]">
            <DocTab label="LIBROS" active className="z-10 w-[82px] pl-[5px]" viewBox="0 0 82 22" d="M0.500 22V3Q0.500 0.500 3 0.500H64Q69 0.500 72 7L77 18Q79 22 82 22" />
            <DocTab label="EMPLEADOS" className="-ml-[10px] w-[112px] pl-[7px]" viewBox="0 0 112 22" d="M0.500 22V3Q0.500 0.500 3 0.500H94Q99 0.500 102 7L107 18Q109 22 112 22" />
            <DocTab label="USUARIOS" className="-ml-[9px] w-[99px] pl-[7px]" viewBox="0 0 99 22" d="M0.500 22V3Q0.500 0.500 3 0.500H81Q86 0.500 89 7L94 18Q96 22 99 22" />
            <button aria-label="Cerrar documento" className="mt-[7px] mr-2 ml-auto"><svg width="8" height="8" viewBox="0 0 8 8"><path d="M0.500 0.500l7 7M7.500 0.500l-7 7" stroke="#333" strokeWidth="1.500" /></svg></button>
          </div>
          <div className="flex min-h-0 flex-1"><BookForm /><ScrollBar /></div>
          <RecordBar />
        </div>
      </main>
      <StatusBar />
      <Taskbar />
    </div>
  );
}
